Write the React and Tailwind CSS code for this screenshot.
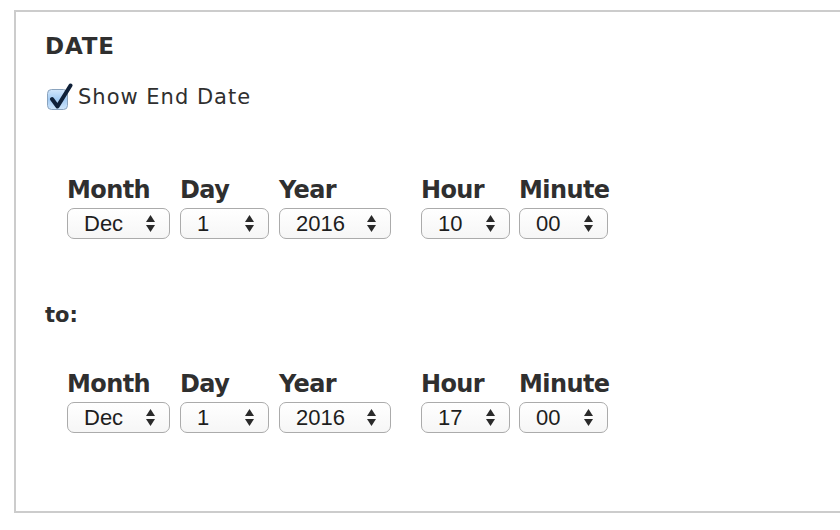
import React from "react";

const Arrows = () => (
  <svg width="9" height="17" viewBox="0 0 9 17" className="shrink-0">
    <polygon points="4.5,0 9,7 0,7" fill="#2a2a2a" />
    <polygon points="0,10 9,10 4.5,17" fill="#2a2a2a" />
  </svg>
);

const Select = ({ value, w }) => (
  <div
    className={`flex h-[31px] items-center justify-between rounded-[7px] border border-[#ababab] bg-gradient-to-b from-white to-[#f6f6f6] pl-[16px] pr-[14px] text-[22px] leading-none text-[#1e1e1e] ${w}`}
    style={{ fontFamily: '"Liberation Sans", Arial, sans-serif' }}
  >
    <span className="pt-[1px]">{value}</span>
    <Arrows />
  </div>
);

const Col = ({ label, value, w }) => (
  <div className="flex flex-col gap-[6px]">
    <div className="h-[24px] text-[24px] font-bold leading-[24px] tracking-[-0.6px] text-[#2f2f2f]">
      {label}
    </div>
    <Select value={value} w={w} />
  </div>
);

const Row = ({ hour }) => (
  <div className="flex pl-[22px]">
    <div className="flex gap-[10px]">
      <Col label="Month" value="Dec" w="w-[103px]" />
      <Col label="Day" value="1" w="w-[89px]" />
      <Col label="Year" value="2016" w="w-[112px]" />
    </div>
    <div className="ml-[30px] flex gap-[9px]">
      <Col label="Hour" value={hour} w="w-[89px]" />
      <Col label="Minute" value="00" w="w-[89px]" />
    </div>
  </div>
);

const CheckBox = () => (
  <svg width="26" height="28" viewBox="0 0 26 28" className="shrink-0">
    <defs>
      <linearGradient id="cb" x1="0" y1="0" x2="0" y2="1">
        <stop offset="0" stopColor="#d3e7fb" />
        <stop offset="0.5" stopColor="#a3cbf3" />
        <stop offset="1" stopColor="#cfe5fb" />
      </linearGradient>
    </defs>
    <rect x="0.5" y="6.5" width="20" height="20" rx="4" fill="url(#cb)" stroke="#8aa3bd" />
    <path d="M5 16 L10.5 23.5 L23.5 2.5" fill="none" stroke="#0f2038" strokeWidth="4" strokeLinecap="round" strokeLinejoin="round" />
  </svg>
);

export default function App() {
  return (
    <div
      className="min-h-[530px] bg-white pt-[10px]"
      style={{ fontFamily: '"DejaVu Sans", "Noto Sans", sans-serif' }}
    >
      <div className="ml-[14px] h-[503px] border-2 border-r-0 border-[#cccccc] pl-[29px] pt-[22px]">
        <div className="h-[24px] text-[23px] font-bold leading-[24px] tracking-[0.8px] text-[#2f2f2f]">
          DATE
        </div>
        <div className="mt-[27px] flex h-[24px] items-center">
          <div className="ml-[2px]">
            <CheckBox />
          </div>
          <span className="ml-[5px] text-[21px] leading-[24px] tracking-[1px] text-[#2f2f2f]">
            Show End Date
          </span>
        </div>
        <div className="mt-[69px]">
          <Row hour="10" />
        </div>
        <div className="mt-[64px] h-[24px] text-[21px] font-bold leading-[24px] text-[#2f2f2f]">
          to:
        </div>
        <div className="mt-[45px]">
          <Row hour="17" />
        </div>
      </div>
    </div>
  );
}
